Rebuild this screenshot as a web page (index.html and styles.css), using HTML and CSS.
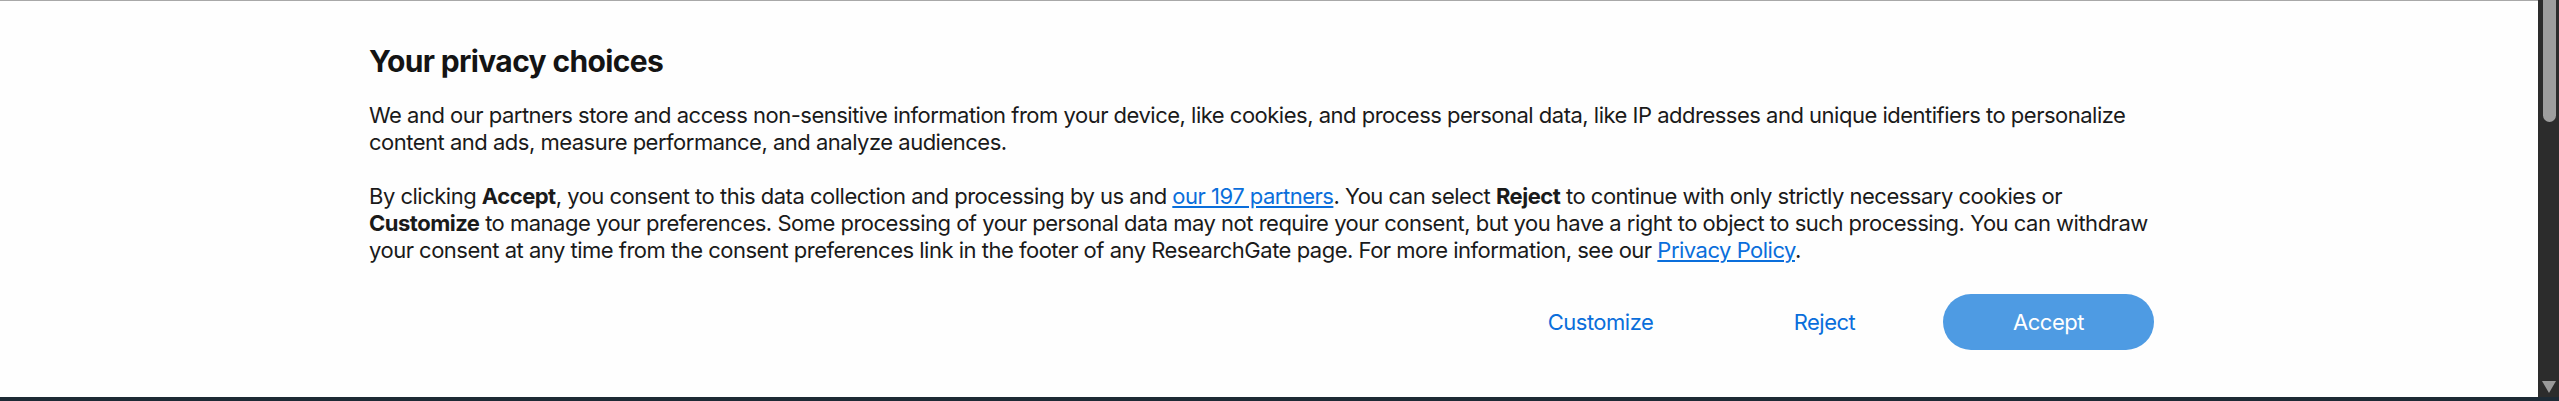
FILE: index.html
```html
<!DOCTYPE html>
<html lang="en">
<head>
<meta charset="utf-8">
<title>Your privacy choices</title>
<link rel="stylesheet" href="styles.css">
</head>
<body>
<div class="frame">
  <div class="top">
    <div class="viewport">
      <section class="banner">
        <h2 class="title">Your privacy choices</h2>
        <p class="text">We and our partners store and access non-sensitive information from your device, like cookies, and process personal data, like IP addresses and unique identifiers to personalize content and ads, measure performance, and analyze audiences.</p>
        <p class="text">By clicking <b>Accept</b>, you consent to this data collection and processing by us and <a class="link" href="#">our 197 partners</a>. You can select <b>Reject</b> to continue with only strictly necessary cookies or <b>Customize</b> to manage your preferences. Some processing of your personal data may not require your consent, but you have a right to object to such processing. You can withdraw your consent at any time from the consent preferences link in the footer of any ResearchGate page. For more information, see our <a class="link" href="#">Privacy Policy</a>.</p>
        <div class="actions">
          <button class="btn btn-text">Customize</button>
          <button class="btn btn-text">Reject</button>
          <button class="btn btn-primary">Accept</button>
        </div>
      </section>
    </div>
    <div class="scrollbar">
      <div class="thumb"></div>
      <div class="arrow"></div>
    </div>
  </div>
  <div class="bottom"></div>
</div>
</body>
</html>
```

FILE: styles.css
```css
html, body {
  margin: 0;
  padding: 0;
  height: 401px;
  overflow: hidden;
  background: #ffffff;
}

.frame {
  display: flex;
  flex-direction: column;
  height: 401px;
}

.top {
  display: flex;
  flex: 1;
  min-height: 0;
}

.viewport {
  flex: 1;
  border-top: 1px solid #a8a8a8;
  background: #fefefe;
  font-family: Inter, "Noto Sans", sans-serif;
  color: #1a1a1a;
}

.banner {
  width: 1785px;
  margin-left: 369px;
  padding-top: 42px;
}

.title {
  margin: 0 0 23px 0;
  font-size: 30px;
  line-height: 36px;
  font-weight: 700;
  letter-spacing: -0.65px;
  color: #141414;
}

.text {
  margin: 0 0 27px 0;
  font-size: 22px;
  line-height: 27px;
  font-weight: 400;
  letter-spacing: -0.5px;
}

.text b {
  font-weight: 700;
}

.link {
  color: #0a6edb;
  text-decoration: underline;
}

.actions {
  display: flex;
  justify-content: flex-end;
  gap: 13px;
  margin-top: 30px;
}

.btn {
  width: 211px;
  height: 56px;
  border: none;
  border-radius: 28px;
  font-family: Inter, "Noto Sans", sans-serif;
  font-size: 22px;
  letter-spacing: -0.5px;
  cursor: pointer;
}

.btn-text {
  background: transparent;
  color: #0a6edb;
}

.btn-primary {
  background: #4e9be3;
  color: #ffffff;
}

.scrollbar {
  width: 21px;
  background: #2c2c2c;
  display: flex;
  flex-direction: column;
  justify-content: space-between;
  align-items: center;
}

.thumb {
  width: 13px;
  height: 122px;
  background: #9e9e9e;
  border-radius: 0 0 7px 7px;
  margin-left: 1px;
}

.arrow {
  width: 0;
  height: 0;
  border-left: 7px solid transparent;
  border-right: 7px solid transparent;
  border-top: 12px solid #9a9a9a;
  margin-bottom: 4px;
}

.bottom {
  height: 4px;
  background: #1d2a35;
}
```
